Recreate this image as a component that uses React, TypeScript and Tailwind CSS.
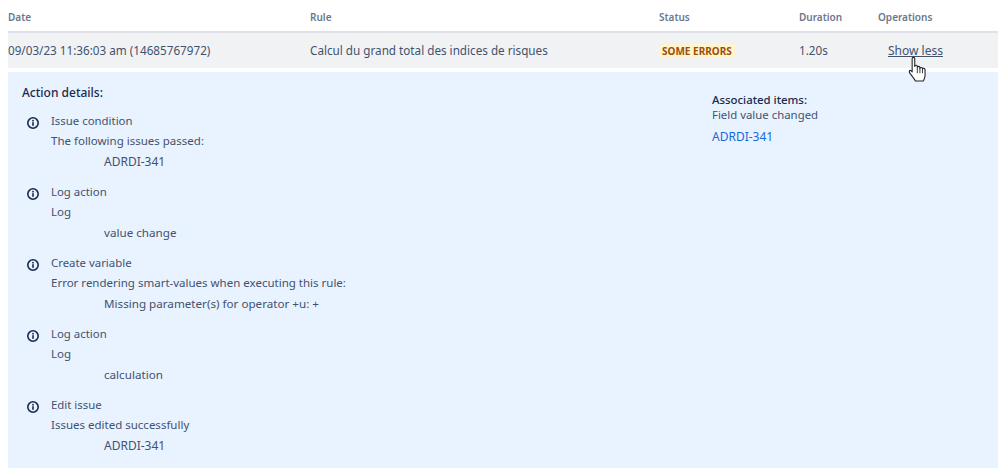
function Icon() {
  return (
    <svg width="14" height="14" viewBox="0 0 14 14" className="shrink-0" fill="none">
      <circle cx="7" cy="7" r="5.2" stroke="#172b4d" strokeWidth="1.6" />
      <rect x="6.2" y="6.2" width="1.6" height="3.6" fill="#172b4d" />
      <rect x="6.2" y="3.9" width="1.6" height="1.6" fill="#172b4d" />
    </svg>
  );
}
function Action({ title, line, sub, upper }: { title: string; line: string; sub: string; upper?: boolean }) {
  return (
    <div className="flex h-[71px]">
      <div className="w-[29px] pl-[4px] pt-[4px]"><Icon /></div>
      <div className="flex flex-col -mt-[1px]">
        <div className="h-[20px] leading-[20px]">{title}</div>
        <div className="h-[20px] leading-[20px] text-[11.5px]">{line}</div>
        <div className={upper ? "h-[20px] mt-[1px] leading-[20px] pl-[53px] text-[12px]" : "h-[20px] mt-[1px] leading-[20px] pl-[53px] text-[11.65px]"}>{sub}</div>
      </div>
    </div>
  );
}
export default function App() {
  return (
    <div className="relative w-[999px] h-[474px] bg-white overflow-hidden text-[11.7px] text-[#42526e] font-['Noto_Sans','Open_Sans',sans-serif]">
      <div className="ml-[8px] w-[990px]">
        <div className="flex h-[33px] items-center border-b-2 border-[#dfe1e6] text-[10px] font-semibold text-[#6b778c] pt-[3px]">
          <div className="w-[302px]">Date</div>
          <div className="w-[349px]">Rule</div>
          <div className="w-[140px]">Status</div>
          <div className="w-[79px]">Duration</div>
          <div>Operations</div>
        </div>
        <div className="flex h-[35px] items-center bg-[#f1f2f4]">
          <div className="w-[302px]">09/03/23 11:36:03 am (14685767972)</div>
          <div className="w-[349px]">Calcul du grand total des indices de risques</div>
          <div className="w-[140px]">
            <span className="inline-block bg-[#fff4cc] text-[#974f0c] font-bold text-[10px] leading-[14px] px-[3px] rounded-[3px]">SOME ERRORS</span>
          </div>
          <div className="w-[89px]">1.20s</div>
          <div className="underline text-[12px] pt-[1px]">Show less</div>
        </div>
        <div className="mt-[4px] h-[396px] bg-[#e9f2ff] flex pl-[14px] pt-[11px] text-[11.4px]">
          <div className="w-[690px]">
            <div className="h-[20px] leading-[20px] font-medium text-[12px] text-[#172b4d]">Action details:</div>
            <div className="mt-[9px]">
              <Action title="Issue condition" line="The following issues passed:" sub="ADRDI-341" upper />
              <Action title="Log action" line="Log" sub="value change" />
              <Action title="Create variable" line="Error rendering smart-values when executing this rule:" sub="Missing parameter(s) for operator +u: +" />
              <Action title="Log action" line="Log" sub="calculation" />
              <Action title="Edit issue" line="Issues edited successfully" sub="ADRDI-341" upper />
            </div>
          </div>
          <div className="pt-[10px]">
            <div className="leading-[14px] font-medium text-[#172b4d]">Associated items:</div>
            <div className="leading-[16px]">Field value changed</div>
            <div className="mt-[6px] leading-[16px] text-[12px] text-[#1868db]">ADRDI-341</div>
          </div>
        </div>
      </div>
      <svg className="absolute left-[905px] top-[56px]" width="24" height="28" viewBox="0 0 22 26">
        <path d="M6.5 2.5c0-1.6 2.4-1.6 2.4 0v7.2c0-1.4 2.4-1.4 2.4 0v1c0-1.4 2.4-1.4 2.4 0v1c0-1.4 2.4-1.4 2.4 0 0-.6 2.4-.6 2.4 1v5c0 2.5-1 3.5-1.5 5.5H9.5c-.8-2-2.7-4-5-7-1.2-1.6-.6-3 .6-2.8l1.4 1.4z" fill="#fff" stroke="#222" strokeWidth="1" strokeLinejoin="round" />
        <path d="M11.3 11v5M13.7 11.5v4.5M16.1 12v4" stroke="#222" strokeWidth="0.8" fill="none" />
      </svg>
    </div>
  );
}
